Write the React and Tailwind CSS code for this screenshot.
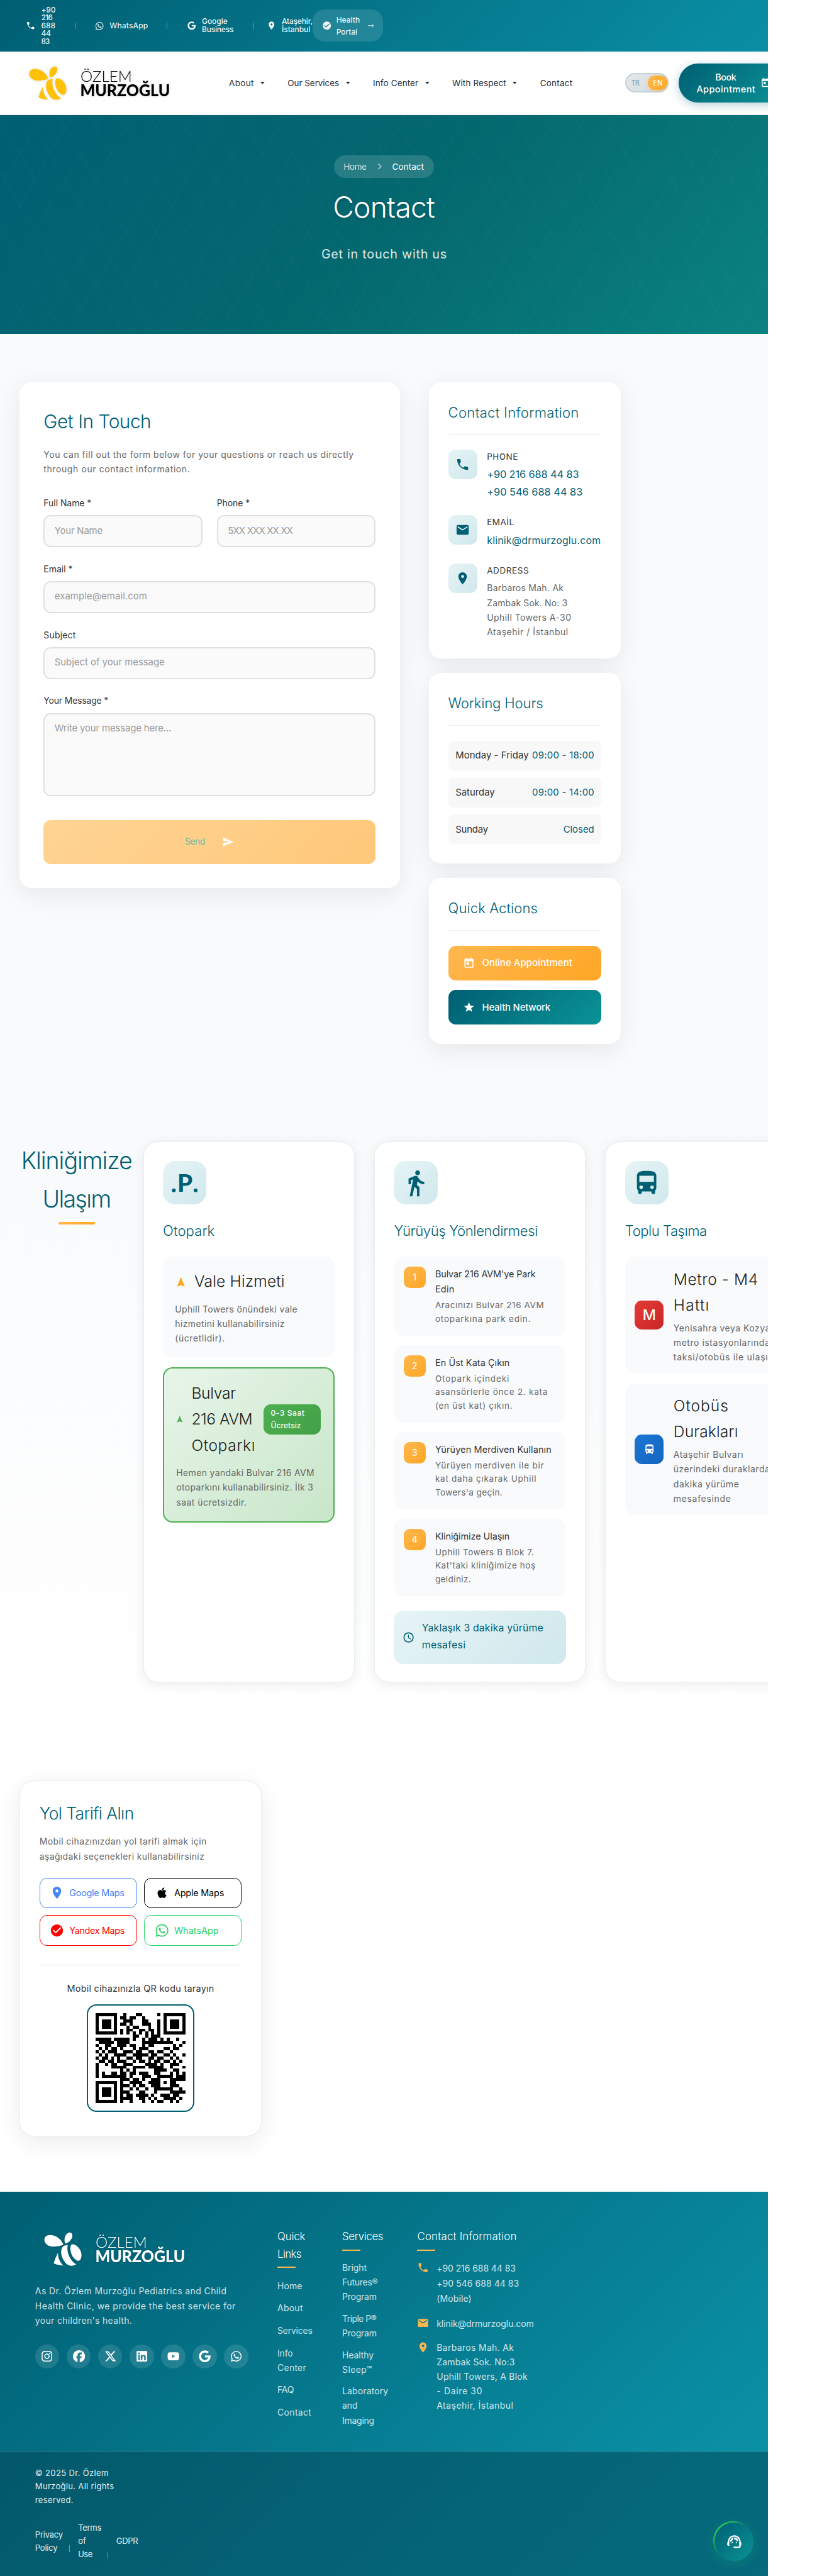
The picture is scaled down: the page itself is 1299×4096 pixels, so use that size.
import React, { useLayoutEffect, useRef, useState } from "react";
import {
  MdPhone,
  MdEmail,
  MdPlace,
  MdCheckCircle,
  MdSend,
  MdToday,
  MdStar,
  MdNavigation,
  MdDirectionsWalk,
  MdDirectionsBus,
  MdSchedule,
  MdSupportAgent,
  MdChevronRight,
} from "react-icons/md";
import {
  FaWhatsapp,
  FaGoogle,
  FaInstagram,
  FaFacebook,
  FaXTwitter,
  FaLinkedin,
  FaYoutube,
  FaApple,
} from "react-icons/fa6";

/* One line of text whose tracking is computed so that it spans w pixels. */
function Fit({ w, children, className = "" }) {
  const ref = useRef(null);
  const [ls, setLs] = useState(0);
  const text = String(children);
  useLayoutEffect(() => {
    const s = getComputedStyle(ref.current);
    const ctx = document.createElement("canvas").getContext("2d");
    ctx.font = `${s.fontWeight} ${s.fontSize} ${s.fontFamily}`;
    setLs((w - ctx.measureText(text).width) / (text.length - 1));
  }, [w, text]);
  return (
    <span
      ref={ref}
      className={`inline-block whitespace-nowrap align-top ${className}`}
      style={{ letterSpacing: `${ls}px`, marginRight: `${-ls}px` }}
    >
      {text}
    </span>
  );
}

function Lines({ items, className = "" }) {
  return (
    <div className={className}>
      {items.map(([t, w]) => (
        <div key={t}>
          <Fit w={w}>{t}</Fit>
        </div>
      ))}
    </div>
  );
}

function Logo({ bee, ink, className = "" }) {
  return (
    <svg viewBox="0 0 765 240" className={`h-20 w-[255px] shrink-0 drop-shadow-[0_1px_2px_rgba(0,0,0,0.15)] ${className}`}>
      <g fill={bee}>
        <path d="M130 100C122 75 95 52 65 52C45 52 35 62 36 78C38 98 60 112 85 110C105 109 120 106 130 100Z" />
        <path d="M140 95C130 75 138 45 160 40C175 40 178 55 172 68C166 82 152 92 140 95Z" />
        <path d="M172 98C185 96 205 108 215 130C224 152 220 172 208 180C195 182 175 165 168 140C163 122 163 105 172 98Z" />
        <path d="M152 103C148 115 150 140 160 160C170 180 182 192 194 197C180 208 155 208 140 190C120 165 115 140 122 118C127 107 138 101 152 103Z" />
        <path d="M103 141C104 165 112 188 130 203C110 203 95 199 82 192C88 175 95 155 103 141Z" />
      </g>
      <g fill={ink} fontFamily="Lato, sans-serif">
        <text x="290" y="114" fontSize="75" fontWeight="300" textLength="255" lengthAdjust="spacingAndGlyphs">
          ÖZLEM
        </text>
        <text x="288" y="188" fontSize="80" fontWeight="900" textLength="445" lengthAdjust="spacingAndGlyphs">
          MURZOĞLU
        </text>
      </g>
    </svg>
  );
}

function TopBar() {
  const bar = "h-[11px] w-px bg-white/40";
  return (
    <div className="flex h-[85px] items-center bg-[linear-gradient(135deg,#005f73_0%,#0a8fa5_100%)] pl-[43px] text-[12.5px] font-medium leading-[13px] text-white/95">
      <MdPhone className="size-4" />
      <Lines className="ml-[9px] w-[24px]" items={[["+90", 24], ["216", 19], ["688", 23.5], ["44", 16], ["83", 14.5]]} />
      <div className={`${bar} ml-[32px]`} />
      <FaWhatsapp className="ml-[32px] size-[15px]" />
      <Fit w={63.5} className="ml-[9px]">WhatsApp</Fit>
      <div className={`${bar} ml-[31px]`} />
      <FaGoogle className="ml-[33px] size-[14px]" />
      <Lines className="ml-[10px] w-[53px]" items={[["Google", 42.5], ["Business", 52.5]]} />
      <div className={`${bar} ml-[31px]`} />
      <MdPlace className="ml-[22px] size-4" />
      <Lines className="ml-[9px] w-[51px]" items={[["Ataşehir,", 51], ["İstanbul", 47]]} />
      <div className="flex h-[53px] w-[116px] items-center rounded-[20px] bg-white/12 pl-[15px]">
        <MdCheckCircle className="size-4" />
        <Lines className="ml-2 w-[39px] leading-5" items={[["Health", 39], ["Portal", 35]]} />
        <svg viewBox="0 0 10 8" className="ml-[13px] h-2 w-[10px]" fill="none" stroke="currentColor" strokeWidth="1">
          <path d="M0 4h9M6.5 1.5L9 4L6.5 6.5" />
        </svg>
      </div>
    </div>
  );
}

function NavItem({ label, w, menu = true }) {
  return (
    <div className="flex items-center">
      <Fit w={w}>{label}</Fit>
      {menu && (
        <svg viewBox="0 0 7 4" className="ml-[11px] mr-[38px] h-1 w-[7px]" fill="currentColor">
          <path d="M0 0h7L3.5 4z" />
        </svg>
      )}
    </div>
  );
}

function Header() {
  return (
    <div className="flex h-[105px] items-center border-b border-[#eaf1f3] bg-white pl-[36px] text-[#1f2d3a]">
      <Logo bee="#ffc107" ink="#000" />
      <div className="ml-[87px] flex w-[570px] shrink-0 items-center text-[14px]">
        <NavItem label="About" w={41} />
        <NavItem label="Our Services" w={85} />
        <NavItem label="Info Center" w={75} />
        <NavItem label="With Respect" w={89} />
        <NavItem label="Contact" w={53.5} menu={false} />
      </div>
      <div className="ml-[84px] flex h-8 w-[72px] shrink-0 items-center rounded-2xl border-[2.1px] border-[#c0d2d7] bg-[linear-gradient(135deg,#e3e8ea,#d5dadc)] text-[11.5px]">
        <Fit w={14} className="ml-[8px] text-[#6fa3ad]">TR</Fit>
        <div className="ml-[14px] flex h-6 w-8 shrink-0 items-center justify-center rounded-xl bg-[linear-gradient(135deg,#ffb74d,#ffa726)] font-medium text-white shadow-[0_2px_6px_rgba(255,167,38,0.4)]">
          <Fit w={16}>EN</Fit>
        </div>
      </div>
      <div className="ml-4 flex h-16 w-[180px] shrink-0 items-center rounded-[32px] bg-[linear-gradient(135deg,#005f73,#0a9396)] text-center text-[15px] font-medium leading-5 text-white shadow-[0_4px_15px_rgba(0,95,115,0.3)]">
        <Lines className="ml-[30px] w-[97px]" items={[["Book", 35], ["Appointment", 97]]} />
        <MdToday className="ml-[9px] size-[18px] shrink-0" />
      </div>
    </div>
  );
}

function Hero() {
  return (
    <div className="relative h-[361px] bg-[linear-gradient(135deg,#005f73_0%,#04686f_50%,#0a8280_100%)]">
      <svg className="absolute inset-0 size-full text-white/[0.025]" fill="none" stroke="currentColor">
        <defs>
          <pattern id="lattice" width="100" height="86.6" patternUnits="userSpaceOnUse" x="58" y="20">
            <path d="M0 0h100M0 0L50 86.6L100 0M0 86.6L50 0L100 86.6" strokeWidth="1.2" />
          </pattern>
        </defs>
        <rect width="100%" height="100%" fill="url(#lattice)" stroke="none" />
      </svg>
      <div className="relative flex flex-col items-center pt-[66px]">
        <div className="flex h-[38px] w-[165px] items-center rounded-[19px] bg-white/15 pl-4 text-[14px] text-white">
          <Fit w={38} className="opacity-80">Home</Fit>
          <MdChevronRight className="ml-[11px] size-5 opacity-60" />
          <Fit w={52.5} className="ml-[11px]">Contact</Fit>
        </div>
        <div className="mt-[17px] text-[48px] font-light leading-[64px] text-white [text-shadow:0_2px_6px_rgba(0,0,0,0.2)]">
          <Fit w={169}>Contact</Fit>
        </div>
        <div className="mt-[29px] text-[20.5px] leading-8 text-white/85">
          <Fit w={207}>Get in touch with us</Fit>
        </div>
      </div>
    </div>
  );
}

function Field({ label, lw, hint, hw, className = "", tall }) {
  return (
    <div className={className}>
      <div className="text-[14.5px] leading-6 text-[#333]">
        <Fit w={lw}>{label}</Fit>
      </div>
      <div
        className={`mt-[8.5px] rounded-xl border-[2.1px] border-[#e0e0e0] bg-[#fafafa] px-4 pt-[12px] text-[15.5px] leading-6 text-[#9a9a9a] ${tall ? "h-[137px]" : "h-[53px]"}`}
      >
        <Fit w={hw}>{hint}</Fit>
      </div>
    </div>
  );
}

const cardShadow = "shadow-[0_10px_40px_rgba(0,0,0,0.08)]";

function ContactForm() {
  return (
    <div className={`h-[835px] w-[628px] shrink-0 rounded-[20px] bg-white px-10 pt-[41px] ${cardShadow}`}>
      <div className="text-[31px] font-light leading-[48px] text-[#005f73]">
        <Fit w={178}>Get In Touch</Fit>
      </div>
      <Lines
        className="mt-[18px] text-[14.5px] leading-6 text-[#666]"
        items={[
          ["You can fill out the form below for your questions or reach us directly", 512],
          ["through our contact information.", 241.5],
        ]}
      />
      <div className="mt-[32px] grid grid-cols-2 gap-6">
        <Field label="Full Name *" lw={79} hint="Your Name" hw={79.5} />
        <Field label="Phone *" lw={54.5} hint="5XX XXX XX XX" hw={108} />
      </div>
      <Field className="mt-[23.5px]" label="Email *" lw={48} hint="example@email.com" hw={153} />
      <Field className="mt-[23.5px]" label="Subject" lw={53} hint="Subject of your message" hw={182} />
      <Field className="mt-[23.5px]" label="Your Message *" lw={107} hint="Write your message here..." hw={193} tall />
      <div className="mt-[40px] flex h-[72px] items-center justify-center rounded-xl bg-[linear-gradient(135deg,#ffd494,#ffc87a)] text-[14.5px] text-[#6db7a8]">
        <Fit w={33.5}>Send</Fit>
        <MdSend className="ml-[28px] size-5 text-white" />
      </div>
    </div>
  );
}

function SideCard({ title, w, className, children }) {
  return (
    <div className={`w-[317px] rounded-[20px] bg-white px-8 pt-[30px] ${cardShadow} ${className}`}>
      <div className="flex h-[57px] items-start border-b border-[#eee] text-[23px] font-light leading-10 text-[#005f73]">
        <Fit w={w}>{title}</Fit>
      </div>
      {children}
    </div>
  );
}

function InfoRow({ icon: Icon, label, lw, className, children }) {
  return (
    <div className={`flex gap-4 ${className}`}>
      <div className="flex size-12 shrink-0 items-center justify-center rounded-xl bg-[linear-gradient(135deg,#e6f4f6,#d0e8ec)] text-[#005f73]">
        <Icon className="size-6" />
      </div>
      <div>
        <div className="text-[14px] leading-[23px] text-[#333]">
          <Fit w={lw}>{label}</Fit>
        </div>
        {children}
      </div>
    </div>
  );
}

function Hours({ day, dw, time, tw }) {
  return (
    <div className="flex h-[49px] items-center justify-between rounded-lg bg-[#f8f8f8] px-3 text-[15.5px]">
      <Fit w={dw} className="text-[#333]">{day}</Fit>
      <Fit w={tw} className="text-[#005f73]">{time}</Fit>
    </div>
  );
}

function Sidebar() {
  return (
    <div className="ml-12 w-[317px]">
      <SideCard title="Contact Information" w={216} className="h-[456px]">
        <InfoRow icon={MdPhone} label="PHONE" lw={51} className="mt-[25px]">
          <Lines
            className="mt-[4px] text-[17px] leading-[29px] text-[#005f73]"
            items={[["+90 216 688 44 83", 152], ["+90 546 688 44 83", 158]]}
          />
        </InfoRow>
        <InfoRow icon={MdEmail} label="EMAİL" lw={44.5} className="mt-[23px]">
          <Lines className="mt-[6px] text-[16.5px] leading-[28px] text-[#005f73]" items={[["klinik@drmurzoglu.com", 188]]} />
        </InfoRow>
        <InfoRow icon={MdPlace} label="ADDRESS" lw={69} className="mt-[23px]">
          <Lines
            className="mt-[5px] text-[14.5px] leading-[24px] text-[#666]"
            items={[["Barbaros Mah. Ak", 126.5], ["Zambak Sok. No: 3", 133], ["Uphill Towers A-30", 139], ["Ataşehir / İstanbul", 134]]}
          />
        </InfoRow>
      </SideCard>
      <SideCard title="Working Hours" w={157} className="mt-6 h-[315px]">
        <div className="mt-[25px] flex flex-col gap-3">
          <Hours day="Monday - Friday" dw={121} time="09:00 - 18:00" tw={102.5} />
          <Hours day="Saturday" dw={65} time="09:00 - 14:00" tw={102.5} />
          <Hours day="Sunday" dw={54} time="Closed" tw={51} />
        </div>
      </SideCard>
      <SideCard title="Quick Actions" w={148} className="mt-6 h-[274px]">
        <div className="mt-[25px] flex h-[57px] items-center rounded-xl bg-[linear-gradient(135deg,#ffb74d,#ffa726)] pl-6 text-[15.5px] font-medium text-white">
          <MdToday className="size-5" />
          <Fit w={149} className="ml-3">Online Appointment</Fit>
        </div>
        <div className="mt-4 flex h-[57px] items-center rounded-xl bg-[linear-gradient(135deg,#005f73,#0a9396)] pl-6 text-[15.5px] font-medium text-white">
          <MdStar className="size-5" />
          <Fit w={113} className="ml-3">Health Network</Fit>
        </div>
      </SideCard>
    </div>
  );
}

function ParkingIcon() {
  return (
    <svg viewBox="0 0 44 48" className="h-12 w-11 overflow-visible" fill="currentColor">
      <circle cx="3.5" cy="36" r="3.1" />
      <circle cx="39.5" cy="36" r="3.1" />
      <text x="22" y="38.5" textAnchor="middle" fontFamily="Lato, sans-serif" fontWeight="900" fontSize="40">
        P
      </text>
    </svg>
  );
}

function AccessCard({ icon, title, w, className = "", children }) {
  return (
    <div
      className={`h-[893px] shrink-0 rounded-[24px] border border-[#005f73]/10 bg-white px-[31.5px] pt-[31.5px] shadow-[0_4px_20px_rgba(0,0,0,0.08)] ${className}`}
    >
      <div className="flex size-[72px] items-center justify-center rounded-[20px] bg-[linear-gradient(135deg,#e6f4f6,#d0e8ec)] text-[#005f73]">
        {icon}
      </div>
      <div className="mt-6 text-[23px] font-light leading-[38px] text-[#005f73]">
        <Fit w={w}>{title}</Fit>
      </div>
      <div className="mt-6">{children}</div>
    </div>
  );
}

function Step({ n, title, text }) {
  return (
    <div className="mb-4 flex rounded-2xl bg-[#f8fafc] p-4">
      <div className="flex size-9 shrink-0 items-center justify-center rounded-[10px] bg-[linear-gradient(135deg,#ffb74d,#ffa726)] text-[15px] text-white">
        {n}
      </div>
      <div className="ml-4">
        <Lines className="text-[15px] leading-[25.6px] text-[#333]" items={title} />
        <Lines className="mt-[2.5px] text-[14px] leading-[22.4px] text-[#666]" items={text} />
      </div>
    </div>
  );
}

function Transit({ badge, className, title, text }) {
  return (
    <div className="mb-4 flex items-center rounded-2xl bg-[#f8fafc] p-4">
      <div className={`flex size-12 shrink-0 items-center justify-center rounded-xl text-white ${className}`}>{badge}</div>
      <div className="ml-4">
        <Lines className="text-[25.5px] font-light leading-[42.7px] text-[#222]" items={title} />
        <Lines className="mt-1 text-[14.5px] leading-6 text-[#666]" items={text} />
      </div>
    </div>
  );
}

function Access() {
  return (
    <div className="flex h-[1054px] bg-[linear-gradient(180deg,#f8fafc_0%,#ffffff_100%)] pl-8 pt-[80.5px]">
      <div className="flex w-[190px] shrink-0 flex-col items-center text-[39px] font-light leading-[64px] text-[#005f73]">
        <Fit w={184}>Kliniğimize</Fit>
        <Fit w={114}>Ulaşım</Fit>
        <div className="mt-[5px] h-1 w-[60px] rounded-sm bg-[linear-gradient(135deg,#ffb74d,#ffa726)]" />
      </div>
      <AccessCard className="ml-[14.5px] w-[349px]" title="Otopark" w={85.5} icon={<ParkingIcon />}>
        <div className="rounded-2xl bg-[#f8fafc] p-5">
          <div className="flex items-center text-[25.5px] font-light leading-[42.7px] text-[#222]">
            <MdNavigation className="mt-[1px] size-5 text-[#ffa726]" />
            <Fit w={149} className="ml-3">Vale Hizmeti</Fit>
          </div>
          <Lines
            className="mt-3 text-[14.5px] leading-6 text-[#666]"
            items={[["Uphill Towers önündeki vale", 202], ["hizmetini kullanabilirsiniz", 181], ["(ücretlidir).", 82]]}
          />
        </div>
        <div className="mt-4 rounded-2xl border-[2.1px] border-[#4caf50] bg-[linear-gradient(135deg,#e8f5e9,#c8e6c9)] p-5">
          <div className="flex items-center">
            <MdNavigation className="ml-[-1px] size-[14px] shrink-0 text-[#4caf50]" />
            <Lines
              className="ml-3 w-[106px] text-[25.5px] font-light leading-[42.7px] text-[#222]"
              items={[["Bulvar", 73.5], ["216 AVM", 101], ["Otoparkı", 105]]}
            />
            <div className="ml-[13px] flex h-[49px] w-[95px] items-center rounded-xl bg-[linear-gradient(135deg,#4caf50,#43a047)] pl-3 text-[12.5px] font-medium leading-[21px] text-white">
              <Lines items={[["0-3 Saat", 55.5], ["Ücretsiz", 50]]} />
            </div>
          </div>
          <Lines
            className="mt-3 text-[14.5px] leading-6 text-[#666]"
            items={[["Hemen yandaki Bulvar 216 AVM", 228], ["otoparkını kullanabilirsiniz. İlk 3", 226], ["saat ücretsizdir.", 116]]}
          />
        </div>
      </AccessCard>
      <AccessCard
        className="ml-[32.5px] w-[349px]"
        title="Yürüyüş Yönlendirmesi"
        w={238}
        icon={<MdDirectionsWalk className="size-12" />}
      >
        <Step
          n="1"
          title={[["Bulvar 216 AVM'ye Park", 166], ["Edin", 31.5]]}
          text={[["Aracınızı Bulvar 216 AVM", 179.5], ["otoparkına park edin.", 157.5]]}
        />
        <Step
          n="2"
          title={[["En Üst Kata Çıkın", 123]]}
          text={[["Otopark içindeki", 122], ["asansörlerle önce 2. kata", 185.5], ["(en üst kat) çıkın.", 127.5]]}
        />
        <Step
          n="3"
          title={[["Yürüyen Merdiven Kullanın", 192]]}
          text={[["Yürüyen merdiven ile bir", 179.5], ["kat daha çıkarak Uphill", 167], ["Towers'a geçin.", 111]]}
        />
        <Step
          n="4"
          title={[["Kliniğimize Ulaşın", 123]]}
          text={[["Uphill Towers B Blok 7.", 163], ["Kat'taki kliniğimize hoş", 165.5], ["geldiniz.", 59]]}
        />
        <div className="mt-6 flex h-[88px] items-center rounded-2xl bg-[linear-gradient(135deg,#e6f4f6,#d0e8ec)] pl-[14px] text-[#005f73]">
          <MdSchedule className="size-5" />
          <Lines
            className="ml-3 text-[16.5px] leading-[28px]"
            items={[["Yaklaşık 3 dakika yürüme", 200.6], ["mesafesi", 72]]}
          />
        </div>
      </AccessCard>
      <AccessCard
        className="ml-[32.5px] w-[349px]"
        title="Toplu Taşıma"
        w={135.5}
        icon={<MdDirectionsBus className="size-12" />}
      >
        <Transit
          badge={<span className="text-[24px] font-medium">M</span>}
          className="bg-[linear-gradient(135deg,#e53935,#c62828)]"
          title={[["Metro - M4", 139.5], ["Hattı", 58.5]]}
          text={[["Yenisahra veya Kozyatağı", 187], ["metro istasyonlarından", 168], ["taksi/otobüs ile ulaşın", 165]]}
        />
        <Transit
          badge={<MdDirectionsBus className="size-5" />}
          className="bg-[linear-gradient(135deg,#1976d2,#1565c0)]"
          title={[["Otobüs", 90.5], ["Durakları", 106.5]]}
          text={[["Ataşehir Bulvarı", 115], ["üzerindeki duraklardan", 168], ["dakika yürüme", 108], ["mesafesinde", 94.5]]}
        />
      </AccessCard>
    </div>
  );
}

const qrRows = [
  "11111110010001100000101111111",
  "10000010110110010000001000001",
  "10111010011100011000101011101",
  "10111010110100011100101011101",
  "10111010001011000100101011101",
  "10000010101100110110101000001",
  "11111110101010101010101111111",
  "00000000000011001011100000000",
  "11111011111010010111010100100",
  "01111101111000011111111110001",
  "10011001110110010110000001010",
  "01010110100010111000001101100",
  "10101110011101100110110010000",
  "01010011110011111011001101001",
  "10110101001101100110110010100",
  "01101101110010110101101101010",
  "10010110011100001111010011100",
  "10000111110011110111110010001",
  "10000000101010000001111001100",
  "10100110110110111001100010101",
  "10111111110100011100111110111",
  "00000000111011010011100011111",
  "11111110100111100111101011000",
  "10000010111010110011100011100",
  "10111010100101001001111110010",
  "10111010111000110001000011111",
  "10111010101101111010011101100",
  "10000010111100110101001111010",
  "11111110100100010010110010100",
];

function QrCode() {
  return (
    <svg viewBox="0 0 29 29" className="size-[148px]" shapeRendering="crispEdges" fill="#000">
      {qrRows.map((row, y) =>
        row.split("").map((c, x) => (c === "1" ? <rect key={`${x}-${y}`} x={x} y={y} width="1" height="1" /> : null))
      )}
    </svg>
  );
}

function MapButton({ icon, label, w, className }) {
  return (
    <div className={`flex h-[50px] items-center rounded-xl border pl-[16px] text-[15px] ${className}`}>
      <div className="flex w-6 justify-center">{icon}</div>
      <Fit w={w} className="ml-[8.5px]">{label}</Fit>
    </div>
  );
}

function Directions() {
  return (
    <div className="h-[761px] bg-white pl-[32.5px] pt-[81.5px]">
      <div className={`h-[588px] w-[399px] rounded-[24px] border border-[#005f73]/10 bg-white px-[31.5px] pt-[31px] ${cardShadow}`}>
        <div className="text-[27.5px] font-light leading-[45px] text-[#005f73]">
          <Fit w={156.5}>Yol Tarifi Alın</Fit>
        </div>
        <Lines
          className="mt-3 text-[14.5px] leading-6 text-[#666]"
          items={[["Mobil cihazınızdan yol tarifi almak için", 276], ["aşağıdaki seçenekleri kullanabilirsiniz", 272.5]]}
        />
        <div className="mt-6 grid grid-cols-2 gap-3">
          <MapButton icon={<MdPlace className="size-6" />} label="Google Maps" w={91} className="border-[#4285f4] text-[#4285f4]" />
          <MapButton icon={<FaApple className="size-5" />} label="Apple Maps" w={82.5} className="border-black text-black" />
          <MapButton icon={<MdCheckCircle className="size-6" />} label="Yandex Maps" w={91.5} className="border-[#ff0000] text-[#ff0000]" />
          <MapButton icon={<FaWhatsapp className="size-6 shrink-0" />} label="WhatsApp" w={73.5} className="border-[#25d366] text-[#25d366]" />
        </div>
        <div className="mt-8 flex flex-col items-center border-t border-[#e0e0e0] pt-6">
          <div className="text-[15px] leading-[26px] text-[#333]">
            <Fit w={243}>Mobil cihazınızla QR kodu tarayın</Fit>
          </div>
          <div className="mt-[14px] flex size-[178px] items-center justify-center rounded-2xl border-[2.1px] border-[#005f73] bg-white">
            <QrCode />
          </div>
        </div>
      </div>
    </div>
  );
}

function ColumnTitle({ items }) {
  return (
    <div>
      <Lines className="text-[17.5px] font-light leading-[29px] text-white" items={items} />
      <div className="mt-[6px] h-[2.1px] w-[30px] bg-[#ffb74d]" />
    </div>
  );
}

function LinkList({ groups, className }) {
  return (
    <div className={`flex flex-col text-[14.5px] leading-6 ${className}`}>
      {groups.map((g) => (
        <Lines key={g[0][0]} items={g} />
      ))}
    </div>
  );
}

const socials = [FaInstagram, FaFacebook, FaXTwitter, FaLinkedin, FaYoutube, FaGoogle, FaWhatsapp];

function Footer() {
  return (
    <div className="relative h-[634px] bg-[linear-gradient(135deg,#005f73_0%,#0a8fa5_85%,#0a91a6_100%)]">
      <div className="flex h-[429px] items-start text-white/80">
        <div className="w-[400px] shrink-0 pt-[54px]">
          <Logo bee="#fff" ink="#fff" className="ml-[61px]" />
          <Lines
            className="ml-[58px] mt-[18px] text-[14.5px] leading-6"
            items={[
              ["As Dr. Özlem Murzoğlu Pediatrics and Child", 316],
              ["Health Clinic, we provide the best service for", 331],
              ["your children's health.", 160],
            ]}
          />
          <div className="ml-[58px] mt-[28px] flex gap-3 text-white">
            {socials.map((Icon, i) => (
              <div key={i} className="flex size-10 shrink-0 items-center justify-center rounded-full bg-white/12">
                <Icon className="size-5" />
              </div>
            ))}
          </div>
        </div>
        <div className="ml-[58px] w-[59px] shrink-0 pt-[60px]">
          <ColumnTitle items={[["Quick", 46], ["Links", 40]]} />
          <LinkList
            className="mt-[17px] gap-[13px]"
            groups={[[["Home", 41]], [["About", 42]], [["Services", 58]], [["Info", 25.5], ["Center", 47.5]], [["FAQ", 27.5]], [["Contact", 56]]]}
          />
        </div>
        <div className="ml-[48px] w-[76px] shrink-0 pt-[60px]">
          <ColumnTitle items={[["Services", 68]]} />
          <LinkList
            className="mt-[16px] gap-[12px]"
            groups={[
              [["Bright", 40.5], ["Futures®", 59], ["Program", 57]],
              [["Triple P®", 57], ["Program", 57]],
              [["Healthy", 52], ["Sleep™", 49]],
              [["Laboratory", 76], ["and", 25.5], ["Imaging", 53]],
            ]}
          />
        </div>
        <div className="ml-[48px] w-[200px] shrink-0 pt-[60px]">
          <ColumnTitle items={[["Contact Information", 164]]} />
          <div className="mt-[17px] flex gap-3 text-[14.5px] leading-[25px]">
            <MdPhone className="mt-[1px] size-5 shrink-0 text-[#ffb74d]" />
            <Lines items={[["+90 216 688 44 83", 130.5], ["+90 546 688 44 83", 136], ["(Mobile)", 57.5]]} />
          </div>
          <div className="mt-[16px] flex gap-3 text-[14.5px] leading-[25px]">
            <MdEmail className="mt-[2px] size-5 shrink-0 text-[#ffb74d]" />
            <Fit w={160.6}>klinik@drmurzoglu.com</Fit>
          </div>
          <div className="mt-[15px] flex gap-3 text-[14.5px] leading-6">
            <MdPlace className="mt-[2px] size-5 shrink-0 text-[#ffb74d]" />
            <Lines
              items={[
                ["Barbaros Mah. Ak", 127.5],
                ["Zambak Sok. No:3", 129],
                ["Uphill Towers, A Blok", 150],
                ["- Daire 30", 75],
                ["Ataşehir, İstanbul", 126.5],
              ]}
            />
          </div>
        </div>
      </div>
      <div className="h-[205px] border-t border-white/15 bg-[#04485a]/55 pl-[58px] pt-[24px] text-[13.5px] leading-[22px] text-white/90">
        <Lines items={[["© 2025 Dr. Özlem", 121], ["Murzoğlu. All rights", 130], ["reserved.", 63]]} />
        <div className="mt-[24px] flex items-center">
          <Lines className="w-[46px]" items={[["Privacy", 46], ["Policy", 37]]} />
          <div className="ml-[10px] mt-[24px] h-[11px] w-px bg-white/40" />
          <Lines className="ml-[14px] w-[39px]" items={[["Terms", 38.5], ["of", 13], ["Use", 24]]} />
          <div className="ml-[10px] mt-[46px] h-[11px] w-px bg-white/40" />
          <Fit w={36} className="ml-[13px]">GDPR</Fit>
        </div>
      </div>
      <div className="absolute bottom-6 right-6 flex size-16 items-center justify-center rounded-full bg-[linear-gradient(135deg,#005f73,#0a9396)] text-white shadow-[-2px_-2px_0_#22c55e,0_4px_20px_rgba(16,150,110,0.4)]">
        <MdSupportAgent className="size-7" />
      </div>
    </div>
  );
}

export default function App() {
  return (
    <div className="h-[4253px] w-[1349px] bg-white font-['Inter',sans-serif] [zoom:0.963]">
      <div className="w-[1268px] overflow-hidden">
        <TopBar />
        <Header />
        <Hero />
        <div className="flex h-[1253px] items-start bg-[#f8fafc] pl-8 pt-20">
          <ContactForm />
          <Sidebar />
        </div>
        <Access />
        <Directions />
        <Footer />
      </div>
    </div>
  );
}
